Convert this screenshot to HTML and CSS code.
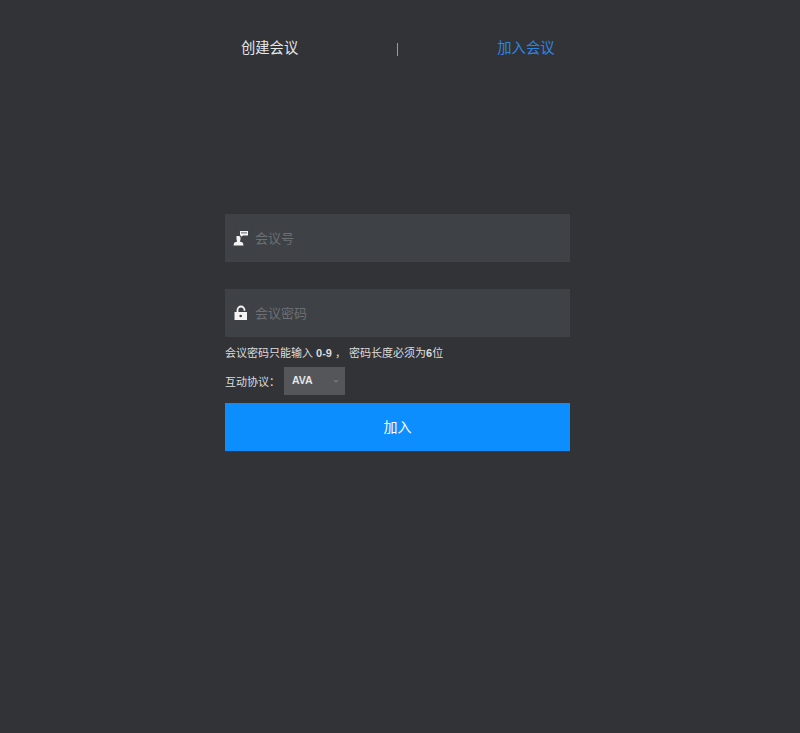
FILE: index.html
```html
<!DOCTYPE html>
<html lang="zh">
<head>
<meta charset="utf-8">
<title>加入会议</title>
<link rel="stylesheet" href="styles.css">
</head>
<body>
<main class="panel">
  <nav class="tabs">
    <a class="tab">创建会议</a>
    <span class="sep"></span>
    <a class="tab active">加入会议</a>
  </nav>
  <form class="form">
    <div class="field room">
      <svg class="icon" width="16" height="16" viewBox="0 0 16 16"><path fill="#f4f4f4" d="M3.500 6h4v3.200l-.6 2.300 3 1.200.6 2.800H0.500l.6-2.800 3-1.200-.6-2.300z"/><path fill="#f4f4f4" stroke="#3e4145" stroke-width="1" d="M6.500 0.500h9v5.500H10l-2 1.500V6H6.500z"/><path fill="#3e4145" d="M8 2.500h6v.8H8z"/></svg>
      <span class="ph">会议号</span>
    </div>
    <div class="field pass">
      <svg class="icon" width="16" height="16" viewBox="0 0 16 16"><path fill="none" stroke="#f4f4f4" stroke-width="1.800" d="M4.500 7.500V5a3.500 3.500 0 0 1 7 0v.8"/><path fill="#f4f4f4" d="M1.500 7h12.500v8H1.500z"/><circle cx="7.700" cy="11" r="1.300" fill="#3e4145"/></svg>
      <span class="ph">会议密码</span>
    </div>
    <p class="hint">会议密码只能输入 <b>0-9</b> ， 密码长度必须为<b>6</b>位</p>
    <div class="proto">
      <span class="proto-label">互动协议：</span>
      <div class="select"><span class="select-value">AVA</span><i class="caret"></i></div>
    </div>
    <button class="join" type="button">加入</button>
  </form>
</main>
</body>
</html>
```

FILE: styles.css
```css
html, body {
  margin: 0;
  height: 100%;
}
body {
  box-sizing: border-box;
  padding-right: 5px;
  background: #313337;
  font-family: "Liberation Sans", "Noto Sans CJK SC", sans-serif;
  color: #e6e6e6;
}
.panel {
  width: 345px;
  margin: 0 auto;
}
.tabs {
  display: flex;
  align-items: center;
  justify-content: space-between;
  height: 20px;
  padding: 38px 15.500px 0 16px;
  font-size: 14.300px;
}
.tab {
  line-height: 20px;
  color: #e6e6e6;
}
.tab.active {
  color: #2f84e0;
}
.sep {
  width: 1px;
  height: 13px;
  margin-top: 2px;
  background: #9a9b9d;
}
.form {
  display: flex;
  flex-direction: column;
  padding-top: 156px;
}
.field {
  display: flex;
  align-items: center;
  gap: 6px;
  height: 48px;
  padding-left: 8px;
  background: #3e4145;
}
.pass {
  margin-top: 27px;
}
.icon {
  display: block;
  flex: none;
}
.ph {
  position: relative;
  top: -1px;
  font-size: 13px;
  color: #6c6f73;
}
.hint {
  margin: 9px 0 0;
  font-size: 11px;
  line-height: 15px;
  color: #dcdcdc;
}
.proto {
  display: flex;
  align-items: center;
  gap: 4px;
  margin-top: 6px;
  font-size: 11px;
  color: #dcdcdc;
}
.select {
  display: flex;
  align-items: center;
  justify-content: space-between;
  box-sizing: border-box;
  width: 61px;
  height: 28px;
  padding: 0 6px 0 8px;
  background: #54565a;
  color: #e6e6e6;
  font-size: 10.500px;
  font-weight: 700;
}
.select-value {
  position: relative;
  top: -1px;
}
.caret {
  width: 0;
  height: 0;
  border-left: 3px solid transparent;
  border-right: 3px solid transparent;
  border-top: 3px solid #6e7074;
}
.join {
  height: 48px;
  margin-top: 8px;
  border: 0;
  padding: 0 0 3px;
  background: #0c8eff;
  color: #fff;
  font: 14px "Liberation Sans", "Noto Sans CJK SC", sans-serif;
}
```
